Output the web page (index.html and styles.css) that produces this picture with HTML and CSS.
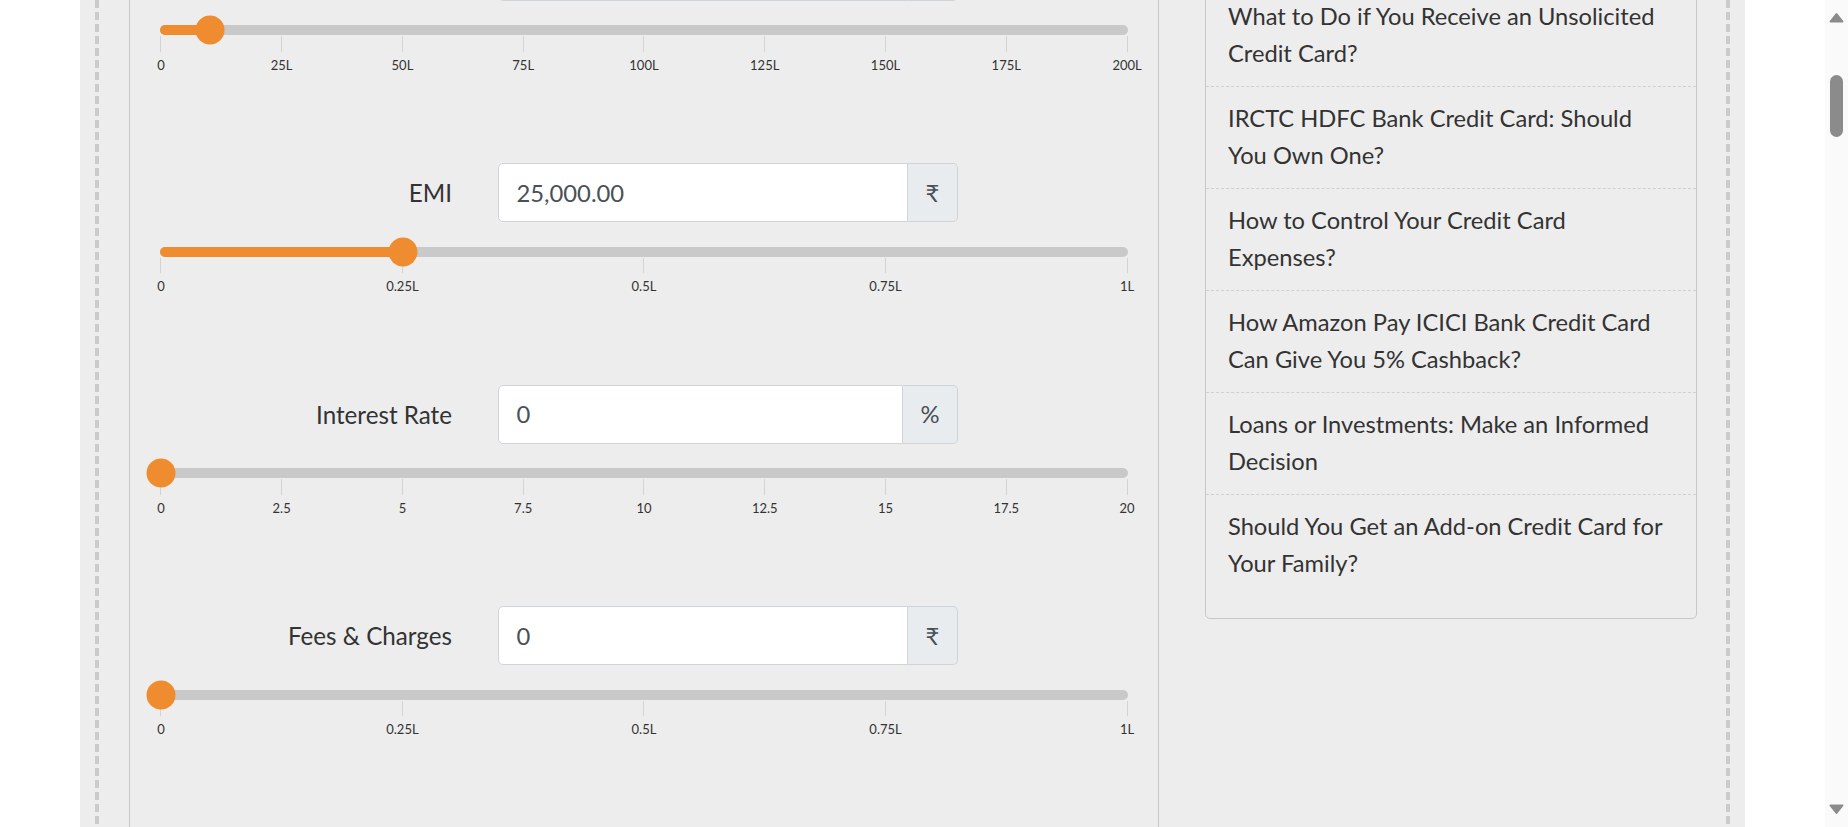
FILE: index.html
```html
<!DOCTYPE html>
<html lang="en">
<head>
<meta charset="utf-8">
<title>Loan Calculator</title>
<link rel="stylesheet" href="styles.css">
</head>
<body>
<div class="page">
  <div class="site">
    <div class="wrap">
      <div class="frame">
        <section class="calc">
          <div class="calc-body">
            <div class="field">
              <div class="row">
                <label class="label">Loan Amount</label>
                <div class="igroup">
                  <div class="input">10,00,000</div>
                  <div class="addon">₹</div>
                </div>
              </div>
              <div class="slider">
                <div class="track">
                  <div class="fill" style="width: 5%"></div>
                  <div class="thumb" style="left: 5%"></div>
                </div>
                <div class="scale">
                  <div class="tick"><span>0</span></div>
                  <div class="tick"><span>25L</span></div>
                  <div class="tick"><span>50L</span></div>
                  <div class="tick"><span>75L</span></div>
                  <div class="tick"><span>100L</span></div>
                  <div class="tick"><span>125L</span></div>
                  <div class="tick"><span>150L</span></div>
                  <div class="tick"><span>175L</span></div>
                  <div class="tick"><span>200L</span></div>
                </div>
              </div>
            </div>

            <div class="field">
              <div class="row">
                <label class="label">EMI</label>
                <div class="igroup">
                  <div class="input">25,000.00</div>
                  <div class="addon">₹</div>
                </div>
              </div>
              <div class="slider">
                <div class="track">
                  <div class="fill" style="width: 25%"></div>
                  <div class="thumb" style="left: 25%"></div>
                </div>
                <div class="scale">
                  <div class="tick"><span>0</span></div>
                  <div class="tick"><span>0.25L</span></div>
                  <div class="tick"><span>0.5L</span></div>
                  <div class="tick"><span>0.75L</span></div>
                  <div class="tick"><span>1L</span></div>
                </div>
              </div>
            </div>

            <div class="field">
              <div class="row">
                <label class="label">Interest Rate</label>
                <div class="igroup">
                  <div class="input">0</div>
                  <div class="addon addon-pct">%</div>
                </div>
              </div>
              <div class="slider">
                <div class="track">
                  <div class="fill" style="width: 0%"></div>
                  <div class="thumb" style="left: 0%"></div>
                </div>
                <div class="scale">
                  <div class="tick"><span>0</span></div>
                  <div class="tick"><span>2.5</span></div>
                  <div class="tick"><span>5</span></div>
                  <div class="tick"><span>7.5</span></div>
                  <div class="tick"><span>10</span></div>
                  <div class="tick"><span>12.5</span></div>
                  <div class="tick"><span>15</span></div>
                  <div class="tick"><span>17.5</span></div>
                  <div class="tick"><span>20</span></div>
                </div>
              </div>
            </div>

            <div class="field">
              <div class="row">
                <label class="label">Fees &amp; Charges</label>
                <div class="igroup">
                  <div class="input">0</div>
                  <div class="addon">₹</div>
                </div>
              </div>
              <div class="slider">
                <div class="track">
                  <div class="fill" style="width: 0%"></div>
                  <div class="thumb" style="left: 0%"></div>
                </div>
                <div class="scale">
                  <div class="tick"><span>0</span></div>
                  <div class="tick"><span>0.25L</span></div>
                  <div class="tick"><span>0.5L</span></div>
                  <div class="tick"><span>0.75L</span></div>
                  <div class="tick"><span>1L</span></div>
                </div>
              </div>
            </div>
          </div>
        </section>

        <aside class="side">
          <ul class="posts">
            <li>What to Do if You Receive an Unsolicited Credit Card?</li>
            <li>IRCTC HDFC Bank Credit Card: Should You Own One?</li>
            <li>How to Control Your Credit Card Expenses?</li>
            <li>How Amazon Pay ICICI Bank Credit Card Can Give You 5% Cashback?</li>
            <li>Loans or Investments: Make an Informed Decision</li>
            <li>Should You Get an Add-on Credit Card for Your Family?</li>
          </ul>
        </aside>
      </div>
    </div>
  </div>
  <div class="scrollbar">
    <svg class="sb-arrow" width="15" height="11" viewBox="0 0 15 11"><polygon points="1.5,9.5 7.5,2 13.5,9.5" fill="#8b8b8b" stroke="#8b8b8b" stroke-width="2" stroke-linejoin="round"/></svg>
    <div class="sb-thumb"></div>
    <svg class="sb-arrow sb-down" width="15" height="11" viewBox="0 0 15 11"><polygon points="1.5,1.5 7.5,9 13.5,1.5" fill="#8b8b8b" stroke="#8b8b8b" stroke-width="2" stroke-linejoin="round"/></svg>
  </div>
</div>
</body>
</html>
```

FILE: styles.css
```css
html, body {
  margin: 0;
  padding: 0;
  height: 827px;
  overflow: hidden;
  background: #ffffff;
  font-family: Lato, "Noto Sans", "DejaVu Sans", sans-serif;
}

.page {
  display: flex;
  height: 827px;
}

.site {
  flex: 1;
  display: flex;
  padding-left: 80px;
}

.wrap {
  width: 1665px;
  box-sizing: border-box;
  padding: 0 15px;
  background: #ededed;
}

.frame {
  height: 100%;
  box-sizing: border-box;
  display: flex;
  align-items: flex-start;
  padding: 0 33px 0 34px;
  overflow: hidden;
  background:
    repeating-linear-gradient(to bottom, #cbcbcb 0 8px, transparent 8px 12px) left top / 4px 100% no-repeat,
    repeating-linear-gradient(to bottom, #cbcbcb 0 8px, transparent 8px 12px) right top / 4px 100% no-repeat;
}

/* calculator panel */
.calc {
  flex: none;
  width: 1030px;
  height: 100%;
  box-sizing: border-box;
  border-left: 1px solid #c8c8c8;
  border-right: 1px solid #c8c8c8;
}

.calc-body {
  margin-top: -58.2px;
}

.field {
  height: 221.5px;
}

.row {
  display: flex;
  align-items: center;
  height: 59px;
}

.label {
  flex: none;
  width: 368px;
  box-sizing: border-box;
  padding-right: 46px;
  text-align: right;
  font-size: 24.2px;
  color: #333333;
}

.igroup {
  flex: none;
  display: flex;
  width: 460px;
  height: 59px;
}

.input {
  flex: 1;
  display: flex;
  align-items: center;
  padding: 0 17.5px;
  background: #ffffff;
  border: 1px solid #ced4da;
  border-radius: 5px 0 0 5px;
  font-size: 23.8px;
  color: #495057;
}

.addon {
  flex: none;
  width: 50px;
  box-sizing: border-box;
  display: flex;
  align-items: center;
  justify-content: center;
  background: #e9ecef;
  border: 1px solid #ced4da;
  border-left: 0;
  border-radius: 0 5px 5px 0;
  font-size: 23.8px;
  color: #495057;
}

.addon-pct {
  width: 55px;
}

.slider {
  margin: 24.5px 30.4px 0;
}

.track {
  position: relative;
  height: 10px;
  border-radius: 5px;
  background: #c9c9c9;
}

.fill {
  position: absolute;
  left: 0;
  top: 0;
  bottom: 0;
  border-radius: 5px 0 0 5px;
  background: #ee8c2f;
}

.thumb {
  position: absolute;
  top: 50%;
  width: 29px;
  height: 29px;
  margin-left: 1px;
  border-radius: 50%;
  background: #ee8c2f;
  transform: translate(-50%, -50%);
}

.scale {
  display: flex;
  justify-content: space-between;
  padding-top: 1px;
}

.tick {
  width: 1px;
  display: flex;
  flex-direction: column;
  align-items: center;
}

.tick::before {
  content: "";
  flex: none;
  width: 1px;
  height: 15.5px;
  background: #d3d3d3;
}

.tick span {
  margin-top: 5px;
  font-size: 13px;
  line-height: 16px;
  color: #333333;
  white-space: nowrap;
}

/* sidebar */
.side {
  flex: none;
  width: 492.5px;
  margin-left: 45.5px;
}

.posts {
  list-style: none;
  margin: -16.3px 0 0;
  padding: 0 0 22px;
  border: 1px solid #c8c8c8;
  border-radius: 5px;
}

.posts li {
  padding: 13px 22.5px;
  border-bottom: 1px dashed #d0d0d0;
  font-size: 23.7px;
  line-height: 37.5px;
  color: #333333;
}

.posts li:last-child {
  border-bottom: 0;
}

/* scrollbar */
.scrollbar {
  flex: none;
  width: 23px;
  display: flex;
  flex-direction: column;
  align-items: center;
  padding: 12px 0 12px;
  box-sizing: border-box;
  background: #fafafa;
}

.sb-arrow {
  display: block;
  flex: none;
}

.sb-thumb {
  flex: none;
  width: 12.7px;
  height: 61.7px;
  margin-top: 52px;
  border-radius: 7px;
  background: #8b8b8b;
}

.sb-down {
  margin-top: auto;
}
```
